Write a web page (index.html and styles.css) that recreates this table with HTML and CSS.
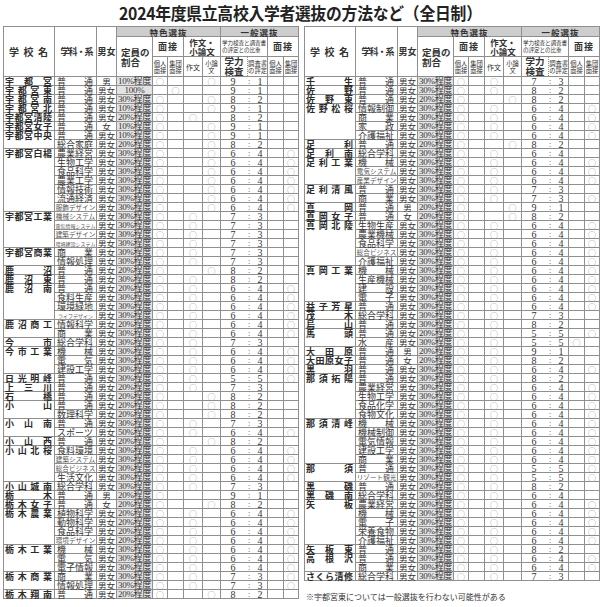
FILE: index.html
```html
<!DOCTYPE html>
<html lang="ja">
<head>
<meta charset="utf-8">
<title>2024年度県立高校入学者選抜の方法など（全日制）</title>
<link rel="stylesheet" href="styles.css">
</head>
<body>
<div class="page">
<h1 class="title">2024年度県立高校入学者選抜の方法など<span class="paren">（</span>全日制<span class="paren">）</span></h1>
<div class="tables">
<table class="tbl">
<colgroup><col class="w1"><col class="w2"><col class="w3"><col class="w4"><col class="w5"><col class="w6"><col class="w7"><col class="w8"><col class="w9"><col class="w10"><col class="w11"><col class="w12"></colgroup>
<thead>
<tr class="h1"><th rowspan="3" class="hs">学校名</th><th rowspan="3" class="hd">学科・系</th><th rowspan="3" class="hg">男女</th><th colspan="5" class="band">特色選抜</th><th colspan="4" class="band">一般選抜</th></tr>
<tr class="h2"><th rowspan="2" class="hq">定員の<br>割合</th><th colspan="2" class="hm">面接</th><th colspan="2" class="hw">作文・<br>小論文</th><th colspan="2" class="tiny">学力検査と調査書<br>の評定との比重</th><th colspan="2" class="hm">面接</th></tr>
<tr class="h3"><th class="sm">個人<br>面接</th><th class="sm">集団<br>面接</th><th class="sm1">作文</th><th class="sm">小論<br>文</th><th class="big kg">学力<br>検査</th><th class="sm cs">調査書<br>の評定</th><th class="sm">個人<br>面接</th><th class="sm">集団<br>面接</th></tr>
</thead>
<tbody>
<tr><td class="s">宇都宮</td><td class="d">普通</td><td class="g">男</td><td class="q">10%程度</td><td>○</td><td></td><td></td><td>○</td><td class="r" colspan="2"><span>9</span><span>:</span><span>1</span></td><td></td><td></td></tr>
<tr><td class="s">宇都宮東</td><td class="d">普通</td><td class="g">男女</td><td class="q">100%</td><td></td><td>○</td><td></td><td></td><td class="r" colspan="2"><span>9</span><span>:</span><span>1</span></td><td></td><td></td></tr>
<tr><td class="s">宇都宮南</td><td class="d">普通</td><td class="g">男女</td><td class="q">30%程度</td><td>○</td><td></td><td></td><td>○</td><td class="r" colspan="2"><span>8</span><span>:</span><span>2</span></td><td></td><td></td></tr>
<tr><td class="s">宇都宮北</td><td class="d">普通</td><td class="g">男女</td><td class="q">10%程度</td><td>○</td><td></td><td></td><td>○</td><td class="r" colspan="2"><span>9</span><span>:</span><span>1</span></td><td></td><td></td></tr>
<tr><td class="s">宇都宮清陵</td><td class="d">普通</td><td class="g">男女</td><td class="q">20%程度</td><td>○</td><td></td><td>○</td><td></td><td class="r" colspan="2"><span>8</span><span>:</span><span>2</span></td><td></td><td></td></tr>
<tr><td class="s">宇都宮女子</td><td class="d">普通</td><td class="g">女</td><td class="q">10%程度</td><td>○</td><td></td><td></td><td>○</td><td class="r" colspan="2"><span>9</span><span>:</span><span>1</span></td><td></td><td></td></tr>
<tr><td class="s" rowspan="2">宇都宮中央</td><td class="d">普通</td><td class="g">男女</td><td class="q">10%程度</td><td>○</td><td></td><td></td><td>○</td><td class="r" colspan="2"><span>9</span><span>:</span><span>1</span></td><td></td><td></td></tr>
<tr><td class="d">総合家庭</td><td class="g">男女</td><td class="q">20%程度</td><td>○</td><td></td><td></td><td>○</td><td class="r" colspan="2"><span>8</span><span>:</span><span>2</span></td><td></td><td></td></tr>
<tr><td class="s" rowspan="7">宇都宮白楊</td><td class="d">農業経営</td><td class="g">男女</td><td class="q">30%程度</td><td>○</td><td></td><td></td><td>○</td><td class="r" colspan="2"><span>6</span><span>:</span><span>4</span></td><td></td><td>○</td></tr>
<tr><td class="d">生物工学</td><td class="g">男女</td><td class="q">30%程度</td><td>○</td><td></td><td></td><td>○</td><td class="r" colspan="2"><span>6</span><span>:</span><span>4</span></td><td></td><td>○</td></tr>
<tr><td class="d">食品科学</td><td class="g">男女</td><td class="q">30%程度</td><td>○</td><td></td><td></td><td>○</td><td class="r" colspan="2"><span>6</span><span>:</span><span>4</span></td><td></td><td>○</td></tr>
<tr><td class="d">農業工学</td><td class="g">男女</td><td class="q">30%程度</td><td>○</td><td></td><td></td><td>○</td><td class="r" colspan="2"><span>6</span><span>:</span><span>4</span></td><td></td><td>○</td></tr>
<tr><td class="d">情報技術</td><td class="g">男女</td><td class="q">30%程度</td><td>○</td><td></td><td></td><td>○</td><td class="r" colspan="2"><span>6</span><span>:</span><span>4</span></td><td></td><td>○</td></tr>
<tr><td class="d">流通経済</td><td class="g">男女</td><td class="q">30%程度</td><td>○</td><td></td><td></td><td>○</td><td class="r" colspan="2"><span>6</span><span>:</span><span>4</span></td><td></td><td>○</td></tr>
<tr><td class="d sm">服飾デザイン</td><td class="g">男女</td><td class="q">30%程度</td><td>○</td><td></td><td></td><td>○</td><td class="r" colspan="2"><span>6</span><span>:</span><span>4</span></td><td></td><td>○</td></tr>
<tr><td class="s" rowspan="4">宇都宮工業</td><td class="d sm">機械システム</td><td class="g">男女</td><td class="q">30%程度</td><td>○</td><td></td><td>○</td><td></td><td class="r" colspan="2"><span>7</span><span>:</span><span>3</span></td><td></td><td></td></tr>
<tr><td class="d xs">電気情報システム</td><td class="g">男女</td><td class="q">30%程度</td><td>○</td><td></td><td>○</td><td></td><td class="r" colspan="2"><span>7</span><span>:</span><span>3</span></td><td></td><td></td></tr>
<tr><td class="d sm">建築デザイン</td><td class="g">男女</td><td class="q">30%程度</td><td>○</td><td></td><td>○</td><td></td><td class="r" colspan="2"><span>7</span><span>:</span><span>3</span></td><td></td><td></td></tr>
<tr><td class="d xs">環境建設システム</td><td class="g">男女</td><td class="q">30%程度</td><td>○</td><td></td><td>○</td><td></td><td class="r" colspan="2"><span>7</span><span>:</span><span>3</span></td><td></td><td></td></tr>
<tr><td class="s" rowspan="2">宇都宮商業</td><td class="d">商業</td><td class="g">男女</td><td class="q">30%程度</td><td>○</td><td></td><td>○</td><td></td><td class="r" colspan="2"><span>7</span><span>:</span><span>3</span></td><td></td><td></td></tr>
<tr><td class="d">情報処理</td><td class="g">男女</td><td class="q">30%程度</td><td>○</td><td></td><td>○</td><td></td><td class="r" colspan="2"><span>7</span><span>:</span><span>3</span></td><td></td><td></td></tr>
<tr><td class="s">鹿沼</td><td class="d">普通</td><td class="g">男女</td><td class="q">20%程度</td><td>○</td><td></td><td></td><td>○</td><td class="r" colspan="2"><span>8</span><span>:</span><span>2</span></td><td></td><td></td></tr>
<tr><td class="s">鹿沼東</td><td class="d">普通</td><td class="g">男女</td><td class="q">30%程度</td><td>○</td><td></td><td>○</td><td></td><td class="r" colspan="2"><span>8</span><span>:</span><span>2</span></td><td></td><td></td></tr>
<tr><td class="s" rowspan="4">鹿沼南</td><td class="d">普通</td><td class="g">男女</td><td class="q">20%程度</td><td>○</td><td></td><td>○</td><td></td><td class="r" colspan="2"><span>6</span><span>:</span><span>4</span></td><td></td><td>○</td></tr>
<tr><td class="d">食料生産</td><td class="g">男女</td><td class="q">30%程度</td><td>○</td><td></td><td>○</td><td></td><td class="r" colspan="2"><span>6</span><span>:</span><span>4</span></td><td></td><td>○</td></tr>
<tr><td class="d">環境緑地</td><td class="g">男女</td><td class="q">30%程度</td><td>○</td><td></td><td>○</td><td></td><td class="r" colspan="2"><span>6</span><span>:</span><span>4</span></td><td></td><td>○</td></tr>
<tr><td class="d xs">ライフデザイン</td><td class="g">男女</td><td class="q">30%程度</td><td>○</td><td></td><td>○</td><td></td><td class="r" colspan="2"><span>6</span><span>:</span><span>4</span></td><td></td><td>○</td></tr>
<tr><td class="s" rowspan="2">鹿沼商工</td><td class="d">情報科学</td><td class="g">男女</td><td class="q">20%程度</td><td>○</td><td></td><td>○</td><td></td><td class="r" colspan="2"><span>6</span><span>:</span><span>4</span></td><td></td><td>○</td></tr>
<tr><td class="d">商業</td><td class="g">男女</td><td class="q">30%程度</td><td>○</td><td></td><td>○</td><td></td><td class="r" colspan="2"><span>6</span><span>:</span><span>4</span></td><td></td><td>○</td></tr>
<tr><td class="s">今市</td><td class="d">総合学科</td><td class="g">男女</td><td class="q">30%程度</td><td>○</td><td></td><td>○</td><td></td><td class="r" colspan="2"><span>7</span><span>:</span><span>3</span></td><td></td><td></td></tr>
<tr><td class="s" rowspan="3">今市工業</td><td class="d">機械</td><td class="g">男女</td><td class="q">30%程度</td><td>○</td><td></td><td>○</td><td></td><td class="r" colspan="2"><span>6</span><span>:</span><span>4</span></td><td></td><td>○</td></tr>
<tr><td class="d">電気</td><td class="g">男女</td><td class="q">30%程度</td><td>○</td><td></td><td>○</td><td></td><td class="r" colspan="2"><span>6</span><span>:</span><span>4</span></td><td></td><td>○</td></tr>
<tr><td class="d">建設工学</td><td class="g">男女</td><td class="q">30%程度</td><td>○</td><td></td><td>○</td><td></td><td class="r" colspan="2"><span>6</span><span>:</span><span>4</span></td><td></td><td>○</td></tr>
<tr><td class="s">日光明峰</td><td class="d">普通</td><td class="g">男女</td><td class="q">30%程度</td><td>○</td><td></td><td>○</td><td></td><td class="r" colspan="2"><span>5</span><span>:</span><span>5</span></td><td></td><td>○</td></tr>
<tr><td class="s">上三川</td><td class="d">普通</td><td class="g">男女</td><td class="q">20%程度</td><td>○</td><td></td><td>○</td><td></td><td class="r" colspan="2"><span>7</span><span>:</span><span>3</span></td><td></td><td></td></tr>
<tr><td class="s">石橋</td><td class="d">普通</td><td class="g">男女</td><td class="q">20%程度</td><td>○</td><td></td><td></td><td>○</td><td class="r" colspan="2"><span>8</span><span>:</span><span>2</span></td><td></td><td></td></tr>
<tr><td class="s" rowspan="2">小山</td><td class="d">普通</td><td class="g">男女</td><td class="q">20%程度</td><td>○</td><td></td><td></td><td>○</td><td class="r" colspan="2"><span>8</span><span>:</span><span>2</span></td><td></td><td></td></tr>
<tr><td class="d">数理科学</td><td class="g">男女</td><td class="q">20%程度</td><td>○</td><td></td><td></td><td>○</td><td class="r" colspan="2"><span>8</span><span>:</span><span>2</span></td><td></td><td></td></tr>
<tr><td class="s" rowspan="2">小山南</td><td class="d">普通</td><td class="g">男女</td><td class="q">30%程度</td><td>○</td><td></td><td>○</td><td></td><td class="r" colspan="2"><span>7</span><span>:</span><span>3</span></td><td></td><td></td></tr>
<tr><td class="d">スポーツ</td><td class="g">男女</td><td class="q">50%程度</td><td>○</td><td></td><td>○</td><td></td><td class="r" colspan="2"><span>6</span><span>:</span><span>4</span></td><td></td><td>○</td></tr>
<tr><td class="s">小山西</td><td class="d">普通</td><td class="g">男女</td><td class="q">20%程度</td><td>○</td><td></td><td></td><td>○</td><td class="r" colspan="2"><span>8</span><span>:</span><span>2</span></td><td></td><td></td></tr>
<tr><td class="s" rowspan="4">小山北桜</td><td class="d">食料環境</td><td class="g">男女</td><td class="q">30%程度</td><td>○</td><td></td><td>○</td><td></td><td class="r" colspan="2"><span>6</span><span>:</span><span>4</span></td><td></td><td>○</td></tr>
<tr><td class="d sm">建築システム</td><td class="g">男女</td><td class="q">30%程度</td><td>○</td><td></td><td>○</td><td></td><td class="r" colspan="2"><span>6</span><span>:</span><span>4</span></td><td></td><td>○</td></tr>
<tr><td class="d sm">総合ビジネス</td><td class="g">男女</td><td class="q">30%程度</td><td>○</td><td></td><td>○</td><td></td><td class="r" colspan="2"><span>6</span><span>:</span><span>4</span></td><td></td><td>○</td></tr>
<tr><td class="d">生活文化</td><td class="g">男女</td><td class="q">30%程度</td><td>○</td><td></td><td>○</td><td></td><td class="r" colspan="2"><span>6</span><span>:</span><span>4</span></td><td></td><td>○</td></tr>
<tr><td class="s">小山城南</td><td class="d">総合学科</td><td class="g">男女</td><td class="q">30%程度</td><td>○</td><td></td><td>○</td><td></td><td class="r" colspan="2"><span>7</span><span>:</span><span>3</span></td><td></td><td></td></tr>
<tr><td class="s">栃木</td><td class="d">普通</td><td class="g">男</td><td class="q">20%程度</td><td>○</td><td></td><td></td><td></td><td class="r" colspan="2"><span>9</span><span>:</span><span>1</span></td><td></td><td></td></tr>
<tr><td class="s">栃木女子</td><td class="d">普通</td><td class="g">女</td><td class="q">20%程度</td><td>○</td><td></td><td></td><td>○</td><td class="r" colspan="2"><span>8</span><span>:</span><span>2</span></td><td></td><td></td></tr>
<tr><td class="s" rowspan="4">栃木農業</td><td class="d">植物科学</td><td class="g">男女</td><td class="q">20%程度</td><td>○</td><td></td><td>○</td><td></td><td class="r" colspan="2"><span>6</span><span>:</span><span>4</span></td><td></td><td>○</td></tr>
<tr><td class="d">動物科学</td><td class="g">男女</td><td class="q">20%程度</td><td>○</td><td></td><td>○</td><td></td><td class="r" colspan="2"><span>6</span><span>:</span><span>4</span></td><td></td><td>○</td></tr>
<tr><td class="d">食品科学</td><td class="g">男女</td><td class="q">20%程度</td><td>○</td><td></td><td>○</td><td></td><td class="r" colspan="2"><span>6</span><span>:</span><span>4</span></td><td></td><td>○</td></tr>
<tr><td class="d sm">環境デザイン</td><td class="g">男女</td><td class="q">20%程度</td><td>○</td><td></td><td>○</td><td></td><td class="r" colspan="2"><span>6</span><span>:</span><span>4</span></td><td></td><td>○</td></tr>
<tr><td class="s" rowspan="3">栃木工業</td><td class="d">機械</td><td class="g">男女</td><td class="q">30%程度</td><td>○</td><td></td><td>○</td><td></td><td class="r" colspan="2"><span>6</span><span>:</span><span>4</span></td><td></td><td>○</td></tr>
<tr><td class="d">電気</td><td class="g">男女</td><td class="q">30%程度</td><td>○</td><td></td><td>○</td><td></td><td class="r" colspan="2"><span>6</span><span>:</span><span>4</span></td><td></td><td>○</td></tr>
<tr><td class="d">電子情報</td><td class="g">男女</td><td class="q">30%程度</td><td>○</td><td></td><td>○</td><td></td><td class="r" colspan="2"><span>6</span><span>:</span><span>4</span></td><td></td><td>○</td></tr>
<tr><td class="s" rowspan="2">栃木商業</td><td class="d">商業</td><td class="g">男女</td><td class="q">30%程度</td><td>○</td><td></td><td>○</td><td></td><td class="r" colspan="2"><span>7</span><span>:</span><span>3</span></td><td></td><td>○</td></tr>
<tr><td class="d">情報処理</td><td class="g">男女</td><td class="q">30%程度</td><td>○</td><td></td><td>○</td><td></td><td class="r" colspan="2"><span>7</span><span>:</span><span>3</span></td><td></td><td>○</td></tr>
<tr><td class="s">栃木翔南</td><td class="d">普通</td><td class="g">男女</td><td class="q">20%程度</td><td>○</td><td></td><td></td><td>○</td><td class="r" colspan="2"><span>8</span><span>:</span><span>2</span></td><td></td><td></td></tr>
</tbody>
</table>
<div class="right">
<table class="tbl">
<colgroup><col class="w1"><col class="w2"><col class="w3"><col class="w4"><col class="w5"><col class="w6"><col class="w7"><col class="w8"><col class="w9"><col class="w10"><col class="w11"><col class="w12"></colgroup>
<thead>
<tr class="h1"><th rowspan="3" class="hs">学校名</th><th rowspan="3" class="hd">学科・系</th><th rowspan="3" class="hg">男女</th><th colspan="5" class="band">特色選抜</th><th colspan="4" class="band">一般選抜</th></tr>
<tr class="h2"><th rowspan="2" class="hq">定員の<br>割合</th><th colspan="2" class="hm">面接</th><th colspan="2" class="hw">作文・<br>小論文</th><th colspan="2" class="tiny">学力検査と調査書<br>の評定との比重</th><th colspan="2" class="hm">面接</th></tr>
<tr class="h3"><th class="sm">個人<br>面接</th><th class="sm">集団<br>面接</th><th class="sm1">作文</th><th class="sm">小論<br>文</th><th class="big kg">学力<br>検査</th><th class="sm cs">調査書<br>の評定</th><th class="sm">個人<br>面接</th><th class="sm">集団<br>面接</th></tr>
</thead>
<tbody>
<tr><td class="s">壬生</td><td class="d">普通</td><td class="g">男女</td><td class="q">30%程度</td><td>○</td><td></td><td>○</td><td></td><td class="r" colspan="2"><span>7</span><span>:</span><span>3</span></td><td></td><td></td></tr>
<tr><td class="s">佐野</td><td class="d">普通</td><td class="g">男女</td><td class="q">30%程度</td><td>○</td><td></td><td>○</td><td></td><td class="r" colspan="2"><span>8</span><span>:</span><span>2</span></td><td></td><td></td></tr>
<tr><td class="s">佐野東</td><td class="d">普通</td><td class="g">男女</td><td class="q">20%程度</td><td>○</td><td></td><td></td><td>○</td><td class="r" colspan="2"><span>8</span><span>:</span><span>2</span></td><td></td><td></td></tr>
<tr><td class="s" rowspan="4">佐野松桜</td><td class="d">情報制御</td><td class="g">男女</td><td class="q">30%程度</td><td>○</td><td></td><td>○</td><td></td><td class="r" colspan="2"><span>6</span><span>:</span><span>4</span></td><td></td><td>○</td></tr>
<tr><td class="d">商業</td><td class="g">男女</td><td class="q">30%程度</td><td>○</td><td></td><td>○</td><td></td><td class="r" colspan="2"><span>6</span><span>:</span><span>4</span></td><td></td><td>○</td></tr>
<tr><td class="d">家政</td><td class="g">男女</td><td class="q">30%程度</td><td>○</td><td></td><td>○</td><td></td><td class="r" colspan="2"><span>6</span><span>:</span><span>4</span></td><td></td><td>○</td></tr>
<tr><td class="d">介護福祉</td><td class="g">男女</td><td class="q">30%程度</td><td>○</td><td></td><td>○</td><td></td><td class="r" colspan="2"><span>6</span><span>:</span><span>4</span></td><td></td><td>○</td></tr>
<tr><td class="s">足利</td><td class="d">普通</td><td class="g">男女</td><td class="q">20%程度</td><td>○</td><td></td><td></td><td>○</td><td class="r" colspan="2"><span>8</span><span>:</span><span>2</span></td><td></td><td></td></tr>
<tr><td class="s">足利南</td><td class="d">総合学科</td><td class="g">男女</td><td class="q">30%程度</td><td>○</td><td></td><td>○</td><td></td><td class="r" colspan="2"><span>6</span><span>:</span><span>4</span></td><td></td><td></td></tr>
<tr><td class="s" rowspan="3">足利工業</td><td class="d">機械</td><td class="g">男女</td><td class="q">30%程度</td><td>○</td><td></td><td>○</td><td></td><td class="r" colspan="2"><span>6</span><span>:</span><span>4</span></td><td></td><td>○</td></tr>
<tr><td class="d sm">電気システム</td><td class="g">男女</td><td class="q">30%程度</td><td>○</td><td></td><td>○</td><td></td><td class="r" colspan="2"><span>6</span><span>:</span><span>4</span></td><td></td><td>○</td></tr>
<tr><td class="d sm">産業デザイン</td><td class="g">男女</td><td class="q">30%程度</td><td>○</td><td></td><td>○</td><td></td><td class="r" colspan="2"><span>6</span><span>:</span><span>4</span></td><td></td><td>○</td></tr>
<tr><td class="s" rowspan="2">足利清風</td><td class="d">普通</td><td class="g">男女</td><td class="q">30%程度</td><td>○</td><td></td><td>○</td><td></td><td class="r" colspan="2"><span>7</span><span>:</span><span>3</span></td><td></td><td></td></tr>
<tr><td class="d">商業</td><td class="g">男女</td><td class="q">30%程度</td><td>○</td><td></td><td>○</td><td></td><td class="r" colspan="2"><span>7</span><span>:</span><span>3</span></td><td></td><td>○</td></tr>
<tr><td class="s">真岡</td><td class="d">普通</td><td class="g">男</td><td class="q">20%程度</td><td>○</td><td></td><td></td><td>○</td><td class="r" colspan="2"><span>9</span><span>:</span><span>1</span></td><td></td><td></td></tr>
<tr><td class="s">真岡女子</td><td class="d">普通</td><td class="g">女</td><td class="q">20%程度</td><td>○</td><td></td><td></td><td>○</td><td class="r" colspan="2"><span>8</span><span>:</span><span>2</span></td><td></td><td></td></tr>
<tr><td class="s" rowspan="5">真岡北陵</td><td class="d">生物生産</td><td class="g">男女</td><td class="q">30%程度</td><td>○</td><td></td><td>○</td><td></td><td class="r" colspan="2"><span>6</span><span>:</span><span>4</span></td><td></td><td>○</td></tr>
<tr><td class="d">農業機械</td><td class="g">男女</td><td class="q">30%程度</td><td>○</td><td></td><td>○</td><td></td><td class="r" colspan="2"><span>6</span><span>:</span><span>4</span></td><td></td><td>○</td></tr>
<tr><td class="d">食品科学</td><td class="g">男女</td><td class="q">30%程度</td><td>○</td><td></td><td>○</td><td></td><td class="r" colspan="2"><span>6</span><span>:</span><span>4</span></td><td></td><td>○</td></tr>
<tr><td class="d sm">総合ビジネス</td><td class="g">男女</td><td class="q">30%程度</td><td>○</td><td></td><td>○</td><td></td><td class="r" colspan="2"><span>6</span><span>:</span><span>4</span></td><td></td><td>○</td></tr>
<tr><td class="d">介護福祉</td><td class="g">男女</td><td class="q">30%程度</td><td>○</td><td></td><td>○</td><td></td><td class="r" colspan="2"><span>6</span><span>:</span><span>4</span></td><td></td><td>○</td></tr>
<tr><td class="s" rowspan="4">真岡工業</td><td class="d">機械</td><td class="g">男女</td><td class="q">30%程度</td><td>○</td><td></td><td>○</td><td></td><td class="r" colspan="2"><span>6</span><span>:</span><span>4</span></td><td></td><td>○</td></tr>
<tr><td class="d">生産機械</td><td class="g">男女</td><td class="q">30%程度</td><td>○</td><td></td><td>○</td><td></td><td class="r" colspan="2"><span>6</span><span>:</span><span>4</span></td><td></td><td>○</td></tr>
<tr><td class="d">建設</td><td class="g">男女</td><td class="q">30%程度</td><td>○</td><td></td><td>○</td><td></td><td class="r" colspan="2"><span>6</span><span>:</span><span>4</span></td><td></td><td>○</td></tr>
<tr><td class="d">電子</td><td class="g">男女</td><td class="q">30%程度</td><td>○</td><td></td><td>○</td><td></td><td class="r" colspan="2"><span>6</span><span>:</span><span>4</span></td><td></td><td>○</td></tr>
<tr><td class="s">益子芳星</td><td class="d">普通</td><td class="g">男女</td><td class="q">30%程度</td><td>○</td><td></td><td>○</td><td></td><td class="r" colspan="2"><span>6</span><span>:</span><span>4</span></td><td></td><td>○</td></tr>
<tr><td class="s">茂木</td><td class="d">総合学科</td><td class="g">男女</td><td class="q">30%程度</td><td>○</td><td></td><td>○</td><td></td><td class="r" colspan="2"><span>7</span><span>:</span><span>3</span></td><td></td><td></td></tr>
<tr><td class="s">烏山</td><td class="d">普通</td><td class="g">男女</td><td class="q">30%程度</td><td>○</td><td></td><td>○</td><td></td><td class="r" colspan="2"><span>8</span><span>:</span><span>2</span></td><td></td><td></td></tr>
<tr><td class="s" rowspan="2">馬頭</td><td class="d">普通</td><td class="g">男女</td><td class="q">20%程度</td><td>○</td><td></td><td>○</td><td></td><td class="r" colspan="2"><span>5</span><span>:</span><span>5</span></td><td></td><td>○</td></tr>
<tr><td class="d">水産</td><td class="g">男女</td><td class="q">30%程度</td><td>○</td><td></td><td>○</td><td></td><td class="r" colspan="2"><span>5</span><span>:</span><span>5</span></td><td>○</td><td></td></tr>
<tr><td class="s">大田原</td><td class="d">普通</td><td class="g">男</td><td class="q">20%程度</td><td>○</td><td></td><td>○</td><td></td><td class="r" colspan="2"><span>9</span><span>:</span><span>1</span></td><td></td><td></td></tr>
<tr><td class="s">大田原女子</td><td class="d">普通</td><td class="g">女</td><td class="q">20%程度</td><td>○</td><td></td><td>○</td><td></td><td class="r" colspan="2"><span>8</span><span>:</span><span>2</span></td><td></td><td></td></tr>
<tr><td class="s">黒羽</td><td class="d">普通</td><td class="g">男女</td><td class="q">30%程度</td><td>○</td><td></td><td>○</td><td></td><td class="r" colspan="2"><span>6</span><span>:</span><span>4</span></td><td></td><td>○</td></tr>
<tr><td class="s" rowspan="5">那須拓陽</td><td class="d">普通</td><td class="g">男女</td><td class="q">30%程度</td><td>○</td><td></td><td>○</td><td></td><td class="r" colspan="2"><span>8</span><span>:</span><span>2</span></td><td></td><td></td></tr>
<tr><td class="d">農業経営</td><td class="g">男女</td><td class="q">30%程度</td><td>○</td><td></td><td>○</td><td></td><td class="r" colspan="2"><span>6</span><span>:</span><span>4</span></td><td></td><td>○</td></tr>
<tr><td class="d">生物工学</td><td class="g">男女</td><td class="q">30%程度</td><td>○</td><td></td><td>○</td><td></td><td class="r" colspan="2"><span>6</span><span>:</span><span>4</span></td><td></td><td>○</td></tr>
<tr><td class="d">食品化学</td><td class="g">男女</td><td class="q">30%程度</td><td>○</td><td></td><td>○</td><td></td><td class="r" colspan="2"><span>6</span><span>:</span><span>4</span></td><td></td><td>○</td></tr>
<tr><td class="d">食物文化</td><td class="g">男女</td><td class="q">30%程度</td><td>○</td><td></td><td>○</td><td></td><td class="r" colspan="2"><span>6</span><span>:</span><span>4</span></td><td></td><td>○</td></tr>
<tr><td class="s" rowspan="5">那須清峰</td><td class="d">機械</td><td class="g">男女</td><td class="q">30%程度</td><td>○</td><td></td><td>○</td><td></td><td class="r" colspan="2"><span>6</span><span>:</span><span>4</span></td><td></td><td>○</td></tr>
<tr><td class="d">機械制御</td><td class="g">男女</td><td class="q">30%程度</td><td>○</td><td></td><td>○</td><td></td><td class="r" colspan="2"><span>6</span><span>:</span><span>4</span></td><td></td><td>○</td></tr>
<tr><td class="d">電気情報</td><td class="g">男女</td><td class="q">30%程度</td><td>○</td><td></td><td>○</td><td></td><td class="r" colspan="2"><span>6</span><span>:</span><span>4</span></td><td></td><td>○</td></tr>
<tr><td class="d">建設工学</td><td class="g">男女</td><td class="q">30%程度</td><td>○</td><td></td><td>○</td><td></td><td class="r" colspan="2"><span>6</span><span>:</span><span>4</span></td><td></td><td>○</td></tr>
<tr><td class="d">商業</td><td class="g">男女</td><td class="q">30%程度</td><td>○</td><td></td><td>○</td><td></td><td class="r" colspan="2"><span>6</span><span>:</span><span>4</span></td><td></td><td>○</td></tr>
<tr><td class="s" rowspan="2">那須</td><td class="d">普通</td><td class="g">男女</td><td class="q">30%程度</td><td>○</td><td></td><td>○</td><td></td><td class="r" colspan="2"><span>5</span><span>:</span><span>5</span></td><td></td><td>○</td></tr>
<tr><td class="d sm">リゾート観光</td><td class="g">男女</td><td class="q">30%程度</td><td>○</td><td></td><td>○</td><td></td><td class="r" colspan="2"><span>5</span><span>:</span><span>5</span></td><td></td><td>○</td></tr>
<tr><td class="s">黒磯</td><td class="d">普通</td><td class="g">男女</td><td class="q">20%程度</td><td>○</td><td></td><td>○</td><td></td><td class="r" colspan="2"><span>8</span><span>:</span><span>2</span></td><td></td><td></td></tr>
<tr><td class="s">黒磯南</td><td class="d">総合学科</td><td class="g">男女</td><td class="q">30%程度</td><td>○</td><td></td><td>○</td><td></td><td class="r" colspan="2"><span>6</span><span>:</span><span>4</span></td><td></td><td></td></tr>
<tr><td class="s" rowspan="5">矢板</td><td class="d">農業経営</td><td class="g">男女</td><td class="q">30%程度</td><td>○</td><td></td><td>○</td><td></td><td class="r" colspan="2"><span>6</span><span>:</span><span>4</span></td><td></td><td>○</td></tr>
<tr><td class="d">機械</td><td class="g">男女</td><td class="q">30%程度</td><td>○</td><td></td><td>○</td><td></td><td class="r" colspan="2"><span>6</span><span>:</span><span>4</span></td><td></td><td>○</td></tr>
<tr><td class="d">電子</td><td class="g">男女</td><td class="q">30%程度</td><td>○</td><td></td><td>○</td><td></td><td class="r" colspan="2"><span>6</span><span>:</span><span>4</span></td><td></td><td>○</td></tr>
<tr><td class="d">栄養食物</td><td class="g">男女</td><td class="q">30%程度</td><td>○</td><td></td><td>○</td><td></td><td class="r" colspan="2"><span>6</span><span>:</span><span>4</span></td><td></td><td>○</td></tr>
<tr><td class="d">介護福祉</td><td class="g">男女</td><td class="q">30%程度</td><td>○</td><td></td><td>○</td><td></td><td class="r" colspan="2"><span>6</span><span>:</span><span>4</span></td><td></td><td>○</td></tr>
<tr><td class="s">矢板東</td><td class="d">普通</td><td class="g">男女</td><td class="q">30%程度</td><td>○</td><td></td><td>○</td><td></td><td class="r" colspan="2"><span>8</span><span>:</span><span>2</span></td><td></td><td></td></tr>
<tr><td class="s" rowspan="2">高根沢</td><td class="d">普通</td><td class="g">男女</td><td class="q">30%程度</td><td>○</td><td></td><td>○</td><td></td><td class="r" colspan="2"><span>6</span><span>:</span><span>4</span></td><td></td><td>○</td></tr>
<tr><td class="d">商業</td><td class="g">男女</td><td class="q">30%程度</td><td>○</td><td></td><td>○</td><td></td><td class="r" colspan="2"><span>6</span><span>:</span><span>4</span></td><td></td><td>○</td></tr>
<tr><td class="s">さくら清修</td><td class="d">総合学科</td><td class="g">男女</td><td class="q">30%程度</td><td>○</td><td></td><td>○</td><td></td><td class="r" colspan="2"><span>7</span><span>:</span><span>3</span></td><td></td><td></td></tr>
</tbody>
</table>
<p class="note">※宇都宮東については一般選抜を行わない可能性がある</p>
</div>
</div>
</div>
</body>
</html>
```

FILE: styles.css
```css
* { box-sizing: border-box; }
html, body { margin: 0; padding: 0; background: #fff; }
body {
  font-family: "Noto Sans CJK JP", sans-serif;
  color: #333;
}
.page { width: 600px; padding: 0 2px 0 3px; }
.title {
  margin: 0;
  height: 26px;
  line-height: 26px;
  font-size: 17px;
  font-weight: 700;
  text-align: center;
  color: #222;
  letter-spacing: -0.3px;
  transform: scaleX(0.93);
}
.title .paren { letter-spacing: -6px; margin-right: 6px; }
.tables { display: flex; gap: 5px; align-items: flex-start; }
.tbl { border-collapse: collapse; table-layout: fixed; width: 295px; }
.w1 { width: 51px; } .w2 { width: 42px; } .w3 { width: 20px; } .w4 { width: 36px; }
.w5 { width: 15px; } .w6 { width: 16px; } .w7 { width: 19px; } .w8 { width: 18px; }
.w9 { width: 27px; } .w10 { width: 20px; } .w11 { width: 16px; } .w12 { width: 15px; }
.tbl th, .tbl td {
  border: 1px solid #8f8f8f;
  padding: 0;
  white-space: nowrap;
}
.tbl th {
  font-weight: 700;
  color: #333;
  font-size: 9px;
  line-height: 9px;
  background: #fff;
  text-align: center;
  vertical-align: middle;
}
.tbl .h1 { height: 10px; }
.tbl .h2 { height: 20px; }
.tbl .h3 { height: 20px; }
.tbl th.band { background: #cdcdcd; font-size: 8.5px; line-height: 8px; letter-spacing: 1px; }
.tbl th.hs { text-align: justify; text-align-last: justify; padding: 0 6px 0 5px; font-size: 10px; }
.tbl th.hd { font-size: 9px; letter-spacing: -1px; padding-left: 2px; }
.tbl th.hg { font-size: 9px; }
.tbl th.hq { text-align: left; padding-left: 4px; font-size: 9.5px; line-height: 10px; }
.tbl th.hm { font-size: 9px; letter-spacing: 1px; }
.tbl th.hw { font-size: 8.5px; line-height: 8.5px; }
.tbl th.tiny { font-size: 5.6px; line-height: 7px; text-align: left; padding-left: 1px; font-weight: 400; letter-spacing: -0.1px; }
.tbl th.sm { font-size: 6.3px; line-height: 7px; font-weight: 400; }
.tbl th.sm1 { font-size: 7px; line-height: 8px; font-weight: 400; }
.tbl th.big { font-size: 9.5px; line-height: 9.5px; }
.tbl th.kg { border-right: 1px dotted #8f8f8f; }
.tbl th.cs { border-left: 1px dotted #8f8f8f; }
.tbl tbody tr { height: 9px; }
.tbl td {
  font-size: 8px;
  line-height: 7px;
  text-align: center;
  vertical-align: middle;
  color: #8c8c8c;
}
.tbl td.s {
  font-weight: 700;
  color: #2a2a2a;
  font-size: 9px;
  text-align: justify;
  text-align-last: justify;
  vertical-align: top;
  padding: 1px 2px 0 1px;
}
.tbl td.d {
  text-align: justify;
  text-align-last: justify;
  padding: 0 3px 0 2px;
  color: #333;
  font-size: 9px;
}
.tbl td.d.sm { font-size: 6.6px; text-align-last: center; padding: 0; color: #555; }
.tbl td.d.xs { font-size: 5px; text-align-last: center; padding: 0; color: #555; }
.tbl td.g { color: #333; font-size: 8.5px; }
.tbl td.q {
  background: #e3e3e3;
  color: #333;
  font-family: "Liberation Serif", "Noto Sans CJK JP", serif;
  font-size: 9px;
  letter-spacing: -0.3px;
}
.tbl td.r {
  text-align: left;
  color: #333;
  font-family: "Liberation Serif", "Noto Sans CJK JP", serif;
  font-size: 10px;
}
.tbl td.r span { display: inline-block; text-align: center; vertical-align: top; line-height: 7px; }
.tbl td.r span:nth-child(1) { width: 24px; }
.tbl td.r span:nth-child(2) { width: 8px; font-size: 8px; }
.tbl td.r span:nth-child(3) { width: 14px; }
.note {
  margin: 11px 0 0 2px;
  font-size: 8px;
  line-height: 10px;
  color: #333;
}
```
